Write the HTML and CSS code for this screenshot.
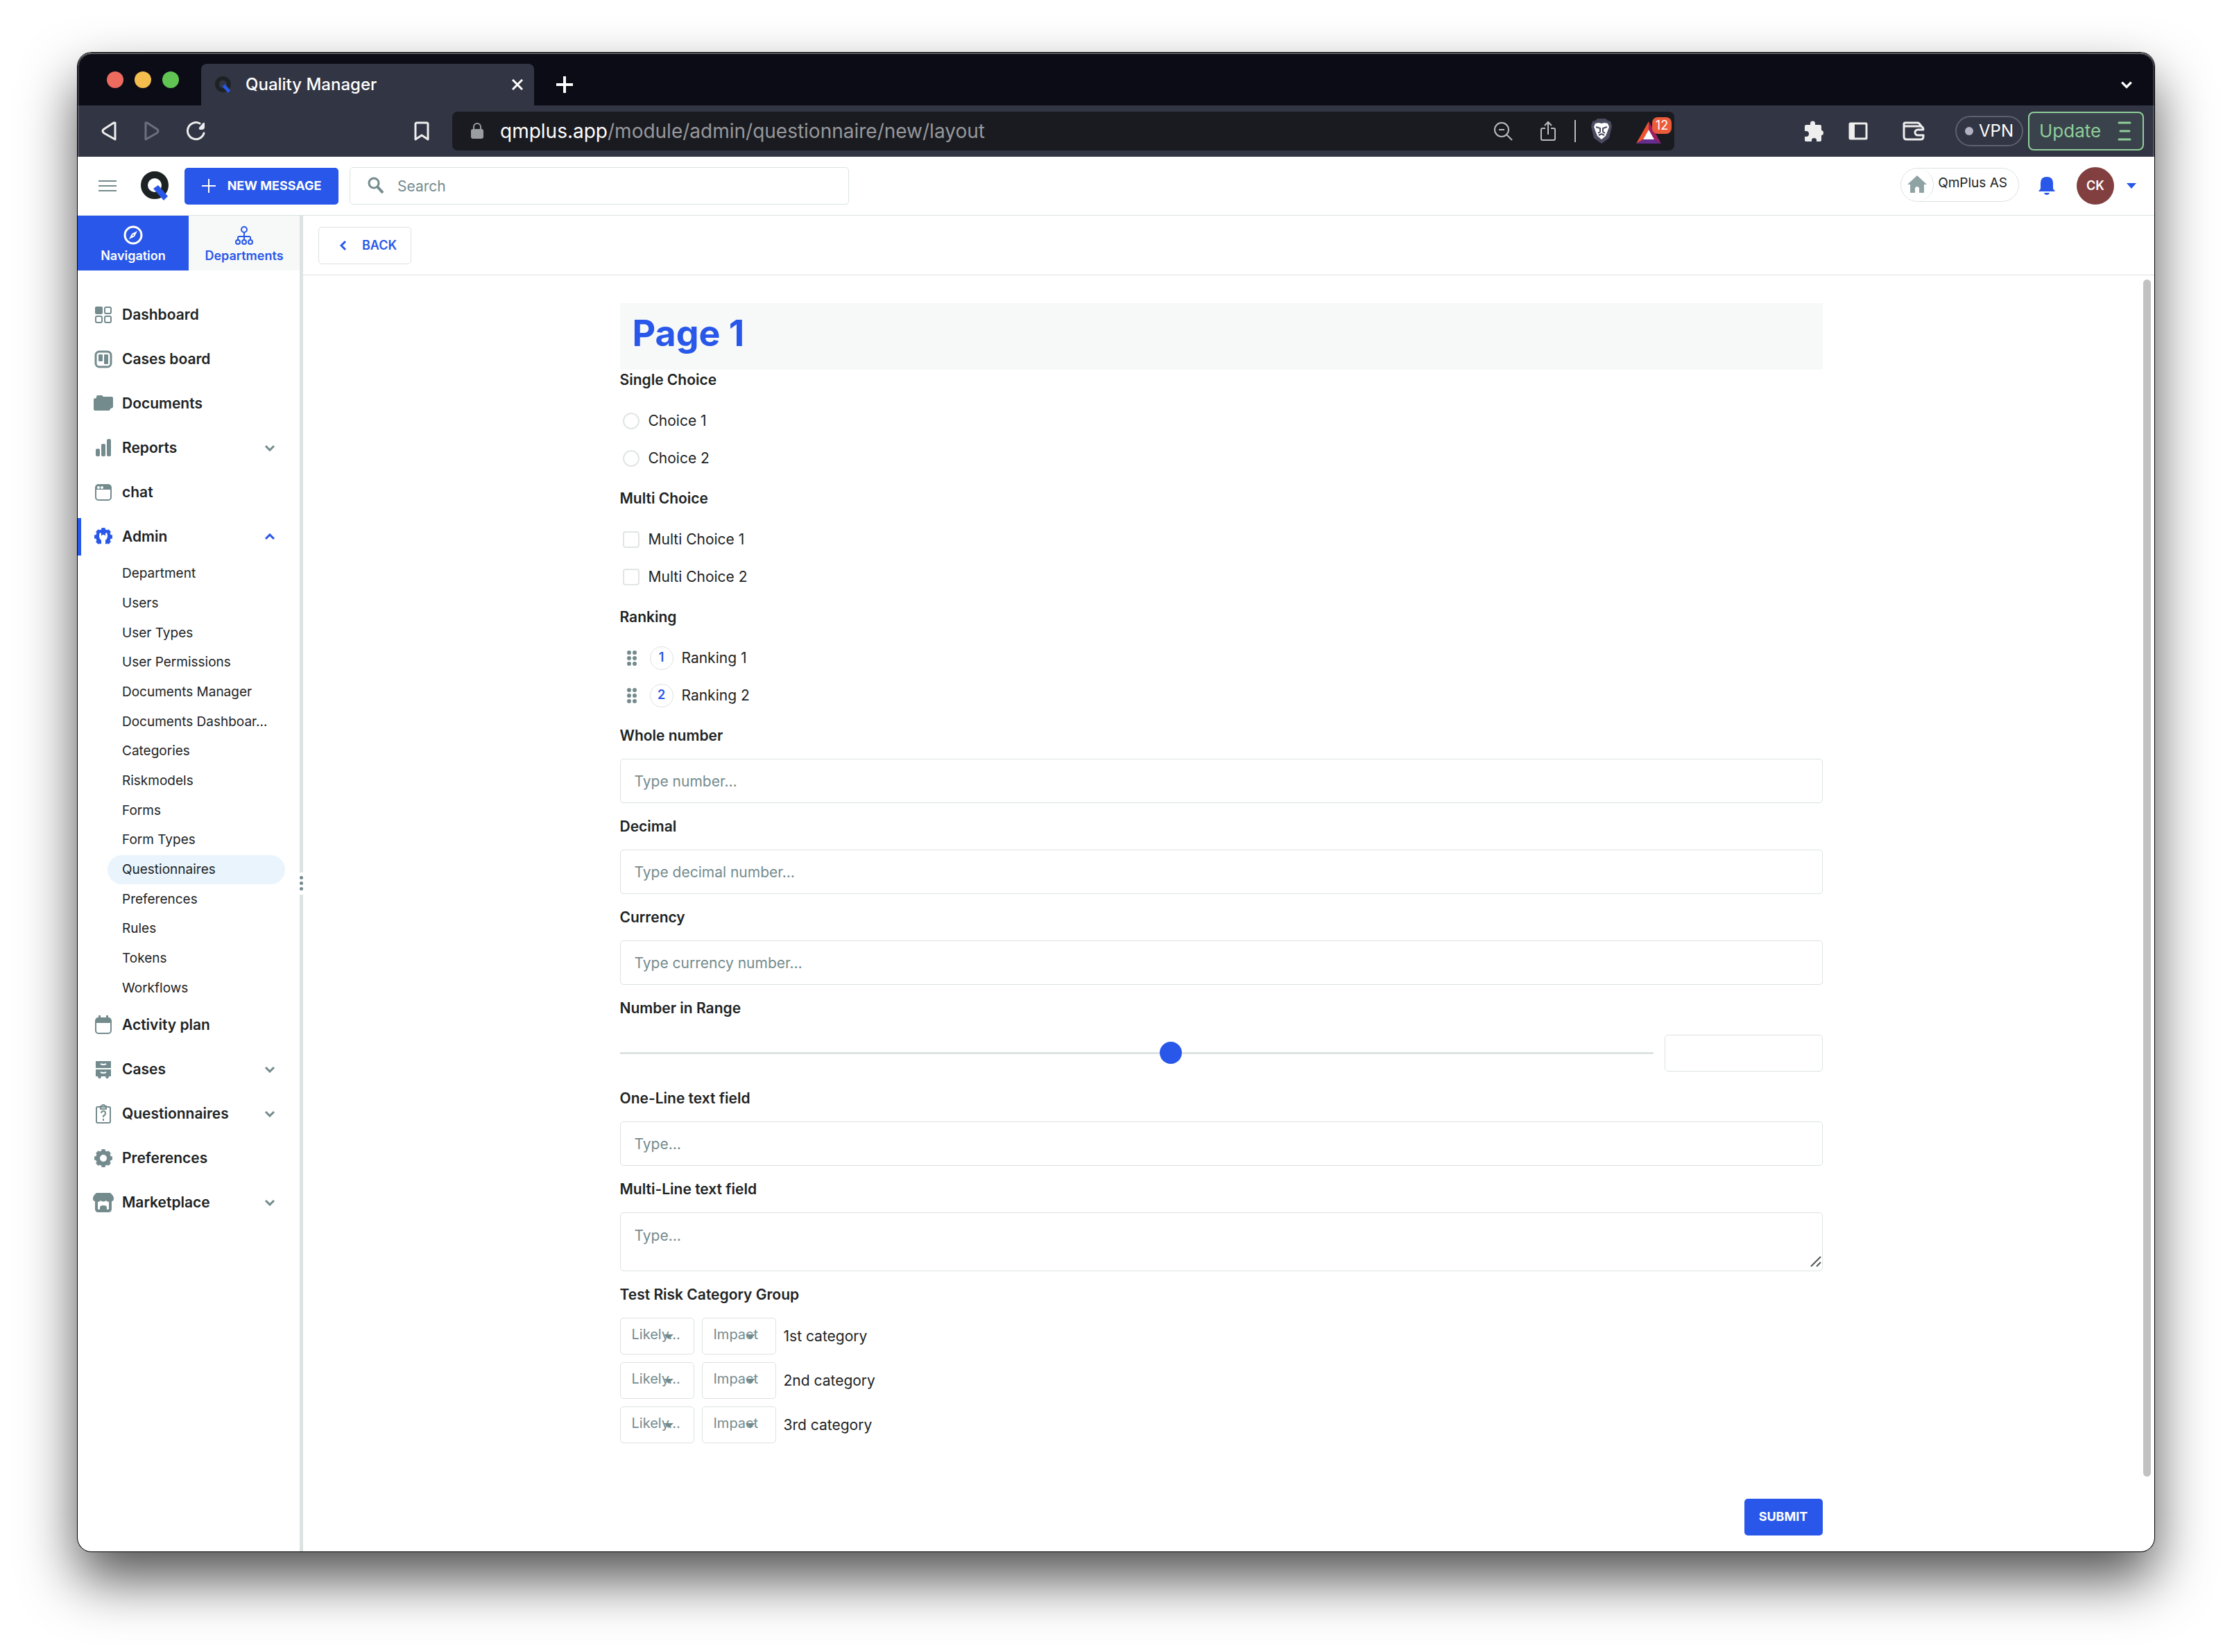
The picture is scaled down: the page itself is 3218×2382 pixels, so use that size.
FILE: index.html
```html
<!DOCTYPE html>
<html lang="en">
<head>
<meta charset="utf-8">
<title>Quality Manager</title>
<link rel="stylesheet" href="styles.css">
</head>
<body>
<svg class="sprite" aria-hidden="true">
  <symbol id="chevron" viewBox="0 0 16 10"><path d="M2 2l6 6 6-6" fill="none" stroke="currentColor" stroke-width="3"/></symbol>
  <symbol id="grip" viewBox="0 0 14 24"><g fill="currentColor"><circle cx="3" cy="4" r="3"/><circle cx="11" cy="4" r="3"/><circle cx="3" cy="12" r="3"/><circle cx="11" cy="12" r="3"/><circle cx="3" cy="20" r="3"/><circle cx="11" cy="20" r="3"/></g></symbol>
  <symbol id="logo" viewBox="0 0 42 42"><ellipse cx="20" cy="20" rx="15" ry="15" fill="none" stroke="#1d2324" stroke-width="10"/><path d="M18 25l7-5 14 16-6 6z" fill="#2857e9"/></symbol>
</svg>

<div class="window">
  <header class="tabbar">
    <div class="lights"><i class="light red"></i><i class="light yellow"></i><i class="light green"></i></div>
    <div class="tab">
      <svg class="i24" aria-hidden="true"><use href="#logo"/></svg>
      <span class="tab-title">Quality Manager</span>
      <button class="plain" aria-label="Close tab"><svg class="i16" viewBox="0 0 16 16"><path d="M1 1l14 14M15 1L1 15" stroke="#fff" stroke-width="3"/></svg></button>
    </div>
    <button class="plain new-tab" aria-label="New tab"><svg class="i24" viewBox="0 0 24 24"><path d="M12 0v24M0 12h24" stroke="#fff" stroke-width="4"/></svg></button>
    <button class="plain tab-menu" aria-label="Search tabs"><svg class="chev-lg"><use href="#chevron"/></svg></button>
  </header>

  <div class="toolbar">
    <div class="history">
      <button class="plain" aria-label="Back"><svg width="24" height="28" viewBox="0 0 24 28"><path d="M21 2v24L5 17q-4-3 0-6L19 2z" fill="none" stroke="#eee" stroke-width="3" stroke-linejoin="round"/></svg></button>
      <button class="plain" aria-label="Forward"><svg width="24" height="28" viewBox="0 0 24 28"><path d="M3 2v24l16-9q4-3 0-6L5 2z" fill="none" stroke="#6d707c" stroke-width="3" stroke-linejoin="round"/></svg></button>
      <button class="plain" aria-label="Reload"><svg width="28" height="28" viewBox="0 0 28 28"><path d="M19 3A12 12 0 1 0 25 17" fill="none" stroke="#eee" stroke-width="3" stroke-linecap="round"/><path d="M26 3v5q0 4-4 4h-3q-2-1-1-3l6-7q2-1 2 1z" fill="#eee"/></svg></button>
    </div>
    <button class="plain" aria-label="Bookmark"><svg width="22" height="28" viewBox="0 0 22 28"><path d="M2 4q0-2 2-2h14q2 0 2 2v22l-9-6-9 6z" fill="none" stroke="#eee" stroke-width="3" stroke-linejoin="round"/></svg></button>
    <div class="address">
      <svg width="18" height="24" viewBox="0 0 18 24"><rect y="9" width="18" height="14" rx="3" fill="#9a9ea1"/><path d="M4 10V6a5 5 0 0 1 10 0v4" fill="none" stroke="#9a9ea1" stroke-width="2"/></svg>
      <span class="url"><b>qmplus.app</b>/module/admin/questionnaire/new/layout</span>
      <svg width="28" height="28" viewBox="0 0 28 28" fill="none" stroke="#b9bbbd" stroke-width="2"><circle cx="12" cy="12" r="10"/><path d="M19 19l8 8M8 12h8"/></svg>
      <svg class="share" width="24" height="30" viewBox="0 0 24 30" fill="none" stroke="#b9bbbd" stroke-width="2"><path d="M8 11H4q-2 0-2 2v13q0 2 2 2h16q2 0 2-2V13q0-2-2-2h-4M12 20V3M7 7l5-5 5 5"/></svg>
      <i class="rule"></i>
      <svg width="32" height="38" viewBox="0 0 32 38"><path d="M10 1h12l3 3 4 1 2 7-4 17-11 8L5 29 1 12l2-7 4-1z" fill="#4b4c60"/><path d="M7 8l5-1 4 1 4-1 5 1 2 5-3 8-2 5-6 5-6-5-2-5-3-8z" fill="#fff"/><path d="M8 13l6 2v5l-3 2M24 13l-6 2v5l3 2M12 25l4-2 4 2" fill="none" stroke="#4b4c60" stroke-width="2"/></svg>
      <span class="rewards">
        <svg width="36" height="32" viewBox="0 0 36 32"><path d="M18 0L0 32l10-6 8-13z" fill="#f0532d"/><path d="M18 0l18 32-10-6-8-13z" fill="#9e1f63"/><path d="M0 32h36l-10-6H10z" fill="#662d91"/><path d="M18 12l8 14H10z" fill="#fff"/></svg>
        <span class="badge">12</span>
      </span>
    </div>
    <div class="extensions">
      <button class="plain" aria-label="Extensions"><svg width="30" height="30" viewBox="0 0 30 30"><path d="M3 6h6V4a3 3 0 0 1 7 0v2h7q2 0 2 2v6h1a4 4 0 0 1 0 7h-1v7q0 2-2 2h-5v-3a4 4 0 0 0-7 0v3H3q-2 0-2-2v-5h2a4 4 0 0 0 0-8H1V8q0-2 2-2z" fill="#eee"/></svg></button>
      <button class="plain" aria-label="Sidebar"><svg width="28" height="26" viewBox="0 0 28 26"><rect x="2" y="2" width="24" height="22" rx="1" fill="none" stroke="#eee" stroke-width="3"/><path d="M3 3h6v20H3z" fill="#eee"/></svg></button>
      <button class="plain wallet" aria-label="Wallet"><svg width="32" height="28" viewBox="0 0 32 28" fill="none" stroke="#eee" stroke-width="3"><path d="M28 8l-4-5q-1-1-3-1H4Q2 2 2 4v18q0 4 4 4h20q4 0 4-4v-3M2 7h24q4 1 4 5"/><path d="M31 12h-9a4 4 0 0 0 0 8h9"/></svg></button>
      <button class="vpn"><i></i>VPN</button>
      <button class="update">Update<svg width="20" height="28" viewBox="0 0 20 28"><path d="M2 2h16M4 14h13M2 26h16" stroke="#8fce9a" stroke-width="3" stroke-linecap="round"/></svg></button>
    </div>
  </div>

  <div class="appbar">
    <button class="plain" aria-label="Menu"><svg width="26" height="18" viewBox="0 0 26 18"><path d="M0 2h26M0 9h26M0 16h26" stroke="#748b8e" stroke-width="2"/></svg></button>
    <a class="logo" href="#" aria-label="Home"><svg width="42" height="42"><use href="#logo"/></svg></a>
    <button class="btn new-message"><svg width="20" height="20" viewBox="0 0 20 20"><path d="M10 0v20M0 10h20" stroke="#fff" stroke-width="2"/></svg>NEW MESSAGE</button>
    <label class="search">
      <svg width="26" height="26" viewBox="0 0 26 26" fill="none" stroke="#748b8e"><circle cx="10" cy="9" r="7" stroke-width="3"/><path d="M15 14l8 9" stroke-width="4"/></svg>
      <input type="search" placeholder="Search" aria-label="Search">
    </label>
    <div class="account">
      <button class="company"><span class="company-icon"><svg width="28" height="26" viewBox="0 0 28 26"><path d="M14 0l14 13h-4v12h-7v-7q-3-4-6 0v7H4V13H0z" fill="#8fa3a5"/></svg></span><span class="company-name">QmPlus AS</span></button>
      <button class="plain bell" aria-label="Notifications"><svg width="24" height="26" viewBox="0 0 24 26"><path d="M12 0q9 0 9 9v8l3 4H0l3-4V9q0-9 9-9zM8 23h8q-1 3-4 3t-4-3z" fill="#2857e9"/></svg></button>
      <span class="avatar">CK</span>
      <button class="plain" aria-label="Account menu"><svg width="14" height="8" viewBox="0 0 14 8"><path d="M0 0h14L7 8z" fill="#2857e9"/></svg></button>
    </div>
  </div>

  <div class="body">
    <aside class="sidebar">
      <div class="switch">
        <button class="switch-item on"><svg width="28" height="28" viewBox="0 0 28 28"><circle cx="14" cy="14" r="12" fill="none" stroke="#fff" stroke-width="3"/><path d="M20 8l-4 8-8 4 4-8z" fill="#fff"/><circle cx="14" cy="14" r="1" fill="#2857e9"/></svg>Navigation</button>
        <button class="switch-item"><svg width="28" height="28" viewBox="0 0 28 28" fill="none" stroke="#2857e9" stroke-width="2"><circle cx="14" cy="6" r="4"/><circle cx="5" cy="24" r="3"/><circle cx="14" cy="24" r="3"/><circle cx="23" cy="24" r="3"/><path d="M14 10v11M5 21v-3q0-2 2-2h14q2 0 2 2v3"/></svg>Departments</button>
      </div>
      <nav class="nav">
        <a href="#"><svg viewBox="0 0 32 32"><rect x="4" y="4" width="11" height="11" rx="2" fill="currentColor"/><g fill="none" stroke="currentColor" stroke-width="2"><rect x="18" y="5" width="9" height="9" rx="2"/><rect x="5" y="18" width="9" height="9" rx="2"/><rect x="18" y="18" width="9" height="9" rx="2"/></g></svg><span>Dashboard</span></a>
        <a href="#"><svg viewBox="0 0 32 32"><rect x="5" y="5" width="22" height="22" rx="5" fill="none" stroke="currentColor" stroke-width="3"/><rect x="9" y="9" width="6" height="10" rx="1" fill="currentColor"/><rect x="17" y="9" width="6" height="14" rx="1" fill="currentColor"/></svg><span>Cases board</span></a>
        <a href="#"><svg viewBox="0 0 32 32"><path d="M6 6q0-2 2-2h6l2 2h12q2 0 2 2v12q0 3-4 3 0 3-2 3H4q-2 0-2-2V10q0-2 4-2z" fill="currentColor"/></svg><span>Documents</span></a>
        <a href="#"><svg viewBox="0 0 32 32" fill="currentColor"><rect x="5" y="17" width="6" height="11" rx="2"/><rect x="13" y="10" width="6" height="18" rx="2"/><rect x="21" y="3" width="6" height="25" rx="2"/></svg><span>Reports</span><svg class="chev"><use href="#chevron"/></svg></a>
        <a href="#"><svg viewBox="0 0 32 32"><rect x="5" y="5" width="22" height="22" rx="4" fill="none" stroke="currentColor" stroke-width="2"/><path d="M5 12V8q0-3 4-3h14q4 0 4 3v4z" fill="currentColor"/><circle cx="9" cy="9" r="2" fill="#fff"/><circle cx="14" cy="9" r="2" fill="#fff"/></svg><span>chat</span></a>
        <a href="#" class="open"><svg viewBox="0 0 32 32"><circle cx="16" cy="16" r="7" fill="none" stroke="currentColor" stroke-width="8"/><circle cx="16" cy="16" r="11" fill="none" stroke="currentColor" stroke-width="4" pathLength="80" stroke-dasharray="6 4" stroke-dashoffset="3"/><path d="M13 30v-9q-5-4-2-11l2 1v5l3 2 3-2v-5l2-1q3 7-2 11v9z" fill="#fff"/></svg><span>Admin</span><svg class="chev up"><use href="#chevron"/></svg></a>
        <div class="subnav">
          <a href="#">Department</a>
          <a href="#">Users</a>
          <a href="#">User Types</a>
          <a href="#">User Permissions</a>
          <a href="#">Documents Manager</a>
          <a href="#">Documents Dashboar…</a>
          <a href="#">Categories</a>
          <a href="#">Riskmodels</a>
          <a href="#">Forms</a>
          <a href="#">Form Types</a>
          <a href="#" class="current">Questionnaires</a>
          <a href="#">Preferences</a>
          <a href="#">Rules</a>
          <a href="#">Tokens</a>
          <a href="#">Workflows</a>
        </div>
        <a href="#"><svg viewBox="0 0 32 32"><rect x="5" y="6" width="22" height="22" rx="4" fill="none" stroke="currentColor" stroke-width="2"/><path d="M5 13V9q0-4 4-4V2h3v3h8V2h3v3q4 0 4 4v4z" fill="currentColor"/></svg><span>Activity plan</span></a>
        <a href="#"><svg viewBox="0 0 32 32"><path d="M5 4h22v10H5zM5 16h22v10h-3l-1 3h-3l-1-3h-6l-1 3H9l-1-3H5z" fill="currentColor"/><path d="M12 8q4 2 8 0M12 20q4 2 8 0" fill="none" stroke="#fff" stroke-width="2"/></svg><span>Cases</span><svg class="chev"><use href="#chevron"/></svg></a>
        <a href="#"><svg viewBox="0 0 32 32" fill="none" stroke="currentColor" stroke-width="2"><rect x="6" y="6" width="20" height="23" rx="2"/><path d="M12 9V5h2a2 2 0 0 1 4 0h2v4zM13 15q0-3 3-3t3 3-3 4v2M16 23v3"/></svg><span>Questionnaires</span><svg class="chev"><use href="#chevron"/></svg></a>
        <a href="#"><svg viewBox="0 0 32 32" fill="none" stroke="currentColor"><circle cx="16" cy="16" r="8" stroke-width="6"/><circle cx="16" cy="16" r="11" stroke-width="4" pathLength="80" stroke-dasharray="6 4" stroke-dashoffset="3"/></svg><span>Preferences</span></a>
        <a href="#"><svg viewBox="0 0 32 32"><path d="M6 2h20q5 4 5 8 0 4-3 4v11q0 5-5 5H9q-5 0-5-5V14q-3 0-3-4 0-4 5-8z" fill="currentColor"/><path d="M8 15q3 0 4-2 4 3 8 0 1 2 4 2v10q0 1-2 1h-1v-3q0-3-5-3t-5 3v3h-1q-2 0-2-1z" fill="#fff"/></svg><span>Marketplace</span><svg class="chev"><use href="#chevron"/></svg></a>
      </nav>
    </aside>
    <div class="splitter"><i class="bar"></i><svg width="5" height="32" viewBox="0 0 10 64" fill="#748b8e"><circle cx="5" cy="15" r="5"/><circle cx="5" cy="31" r="5"/><circle cx="5" cy="47" r="5"/></svg><i class="bar"></i></div>

    <main class="main">
      <div class="backbar"><button class="back"><svg width="10" height="16" viewBox="0 0 10 16"><path d="M8 2L2 8l6 6" fill="none" stroke="#2857e9" stroke-width="3"/></svg>BACK</button></div>
      <div class="scroll">
        <form class="form">
          <h1>Page 1</h1>
          <fieldset class="choices">
            <legend>Single Choice</legend>
            <label><input type="radio" name="single">Choice 1</label>
            <label><input type="radio" name="single">Choice 2</label>
          </fieldset>
          <fieldset class="choices">
            <legend>Multi Choice</legend>
            <label><input type="checkbox">Multi Choice 1</label>
            <label><input type="checkbox">Multi Choice 2</label>
          </fieldset>
          <fieldset class="choices">
            <legend>Ranking</legend>
            <div class="rank"><svg width="14" height="24"><use href="#grip"/></svg><b>1</b>Ranking 1</div>
            <div class="rank"><svg width="14" height="24"><use href="#grip"/></svg><b>2</b>Ranking 2</div>
          </fieldset>
          <div class="field"><label for="whole">Whole number</label><input class="box" id="whole" type="text" placeholder="Type number…"></div>
          <div class="field"><label for="decimal">Decimal</label><input class="box" id="decimal" type="text" placeholder="Type decimal number…"></div>
          <div class="field"><label for="currency">Currency</label><input class="box" id="currency" type="text" placeholder="Type currency number…"></div>
          <div class="field range-field"><label for="range">Number in Range</label>
            <div class="range"><input id="range" type="range" min="0" max="1000" value="534"><input class="box amount" type="text" aria-label="Number in Range value"></div>
          </div>
          <div class="field"><label for="line">One-Line text field</label><input class="box" id="line" type="text" placeholder="Type…"></div>
          <div class="field"><label for="multi">Multi-Line text field</label>
            <div class="area"><textarea class="box" id="multi" placeholder="Type…"></textarea><svg width="16" height="16" viewBox="0 0 16 16"><path d="M1 15L15 1M9 15l6-6" stroke="#555" stroke-width="2"/></svg></div>
          </div>
          <fieldset class="risk">
            <legend>Test Risk Category Group</legend>
            <div class="risk-row"><span class="pick"><select aria-label="1st category likelyhood"><option>Likely…</option></select></span><span class="pick"><select aria-label="1st category impact"><option>Impact</option></select></span>1st category</div>
            <div class="risk-row"><span class="pick"><select aria-label="2nd category likelyhood"><option>Likely…</option></select></span><span class="pick"><select aria-label="2nd category impact"><option>Impact</option></select></span>2nd category</div>
            <div class="risk-row"><span class="pick"><select aria-label="3rd category likelyhood"><option>Likely…</option></select></span><span class="pick"><select aria-label="3rd category impact"><option>Impact</option></select></span>3rd category</div>
          </fieldset>
          <button type="button" class="btn submit">SUBMIT</button>
        </form>
        <i class="thumb"></i>
      </div>
    </main>
  </div>
</div>
</body>
</html>
```
FILE: styles.css
```css
:root {
  --blue: #2857e9;
  --ink: #1d2324;
  --muted: #748b8e;
  --line: #dde2e2;
}

* { box-sizing: border-box; }

body {
  margin: 0;
  padding: 76px 112px 148px;
  background: #fff;
  color: var(--ink);
  font: 400 21px/30px Inter, "Liberation Sans", sans-serif;
}

button, input, select, textarea { font: inherit; color: inherit; }
button { cursor: pointer; white-space: nowrap; }
a { color: inherit; text-decoration: none; }
svg { display: block; flex: none; }
i { display: block; }

.sprite { position: absolute; width: 0; height: 0; }
.plain { display: flex; padding: 0; border: 0; background: none; }
.i16 { width: 16px; height: 16px; }
.i24 { width: 24px; height: 24px; }

.window {
  overflow: hidden;
  border-radius: 20px;
  background: #fff;
  box-shadow: 0 0 0 1px #000, 0 40px 80px rgba(0, 0, 0, .68);
}

/* Browser tabs */
.tabbar {
  display: flex;
  align-items: flex-end;
  height: 76px;
  background: #0b0c15;
  border-top: 2px solid #55595c;
  border-radius: 20px 20px 0 0;
  box-shadow: inset 2px 0 #35363e, inset -2px 0 #35363e;
}
.lights { display: flex; gap: 16px; padding: 0 32px 25px 42px; }
.light { width: 24px; height: 24px; border-radius: 50%; }
.red { background: #ed6a5e; }
.yellow { background: #f4be4f; }
.green { background: #61c554; }
.tab {
  display: flex;
  align-items: center;
  width: 480px;
  height: 60px;
  padding: 0 16px 0 20px;
  border-radius: 8px 8px 0 0;
  background: #323543;
  color: #fff;
  font-size: 24px;
  font-weight: 500;
}
.tab-title { flex: 1; padding-left: 20px; }
.new-tab { padding: 0 32px 18px; }
.tab-menu { margin-left: auto; padding: 0 31px 24px; color: #fff; }
.chev-lg { width: 18px; height: 12px; }

/* Browser toolbar */
.toolbar {
  display: flex;
  align-items: center;
  height: 74px;
  padding: 0 15px 0 33px;
  background: #323543;
  box-shadow: inset 2px 0 #52555f, inset -2px 0 #52555f;
}
.history { display: flex; align-items: center; gap: 38px; flex: 1; max-width: 452px; }
.address {
  display: flex;
  align-items: center;
  flex: 1;
  max-width: 1762px;
  height: 56px;
  margin-left: 33px;
  padding: 0 4px 0 27px;
  border-radius: 8px;
  background: #1a1b20;
}
.url { flex: 1; padding-left: 24px; color: #96989c; font-size: 28px; }
.url b { color: #fff; font-weight: 400; }
.share { margin: 0 26px 0 39px; }
.rule { width: 2px; height: 32px; margin-right: 21px; background: #b9bbbd; }
.rewards { position: relative; padding: 4px 15px 0 34px; }
.badge {
  position: absolute;
  top: -2px;
  right: 0;
  width: 28px;
  height: 24px;
  border-radius: 8px;
  background: #ec5b3a;
  color: #fff;
  font-size: 18px;
  line-height: 24px;
  text-align: center;
}
.extensions { display: flex; align-items: center; margin-left: auto; }
.extensions .plain { margin-right: 34px; }
.extensions .wallet { margin: 0 44px 0 16px; }
.vpn {
  display: flex;
  align-items: center;
  gap: 8px;
  width: 98px;
  height: 44px;
  margin-right: 7px;
  padding: 0 0 0 12px;
  border: 2px solid #5d606d;
  border-radius: 22px;
  background: none;
  color: #fff;
  font-size: 24px;
}
.vpn i { width: 12px; height: 12px; border-radius: 50%; background: #b1b3c3; }
.update {
  display: flex;
  align-items: center;
  justify-content: space-between;
  width: 167px;
  height: 56px;
  padding: 0 16px 0 14px;
  border: 2px solid #8fce9a;
  border-radius: 8px;
  background: #3a424b;
  color: #8fce9a;
  font-size: 26px;
}

/* Application bar */
.appbar {
  display: flex;
  align-items: center;
  height: 85px;
  padding: 0 26px 0 30px;
  border-bottom: 1px solid var(--line);
}
.logo { margin: 0 21px 0 35px; }
.btn {
  display: flex;
  align-items: center;
  justify-content: center;
  height: 53px;
  padding: 0 20px;
  border: 0;
  border-radius: 5px;
  background: var(--blue);
  color: #fff;
  font-size: 18px;
  font-weight: 700;
}
.new-message { gap: 17px; width: 222px; }
.search {
  display: flex;
  align-items: center;
  width: 720px;
  height: 54px;
  margin-left: 16px;
  padding: 0 24px;
  border: 1px solid var(--line);
  border-radius: 5px;
}
.search input { flex: 1; padding: 2px 0 0 18px; border: 0; background: none; outline: 0; }
::placeholder { color: var(--muted); opacity: 1; }
.account { display: flex; align-items: center; margin-left: auto; }
.company {
  display: flex;
  align-items: center;
  gap: 6px;
  height: 49px;
  margin-bottom: 4px;
  padding: 0 16px 0 0;
  border: 1px solid var(--line);
  border-radius: 25px;
  background: #fff;
  font-size: 19px;
}
.company-name { padding-bottom: 4px; }
.company-icon {
  display: grid;
  place-items: center;
  width: 47px;
  height: 47px;
  border-right: 1px solid var(--line);
  border-radius: 50%;
}
.bell { margin: 0 31px 0 28px; }
.avatar {
  width: 54px;
  height: 54px;
  margin-right: 18px;
  border-radius: 50%;
  background: #813f3f;
  color: #fff;
  font-size: 18px;
  font-weight: 600;
  line-height: 54px;
  text-align: center;
}

/* Sidebar */
.body { display: flex; }
.sidebar { flex: none; width: 320px; }
.switch { display: grid; grid-template-columns: 1fr 1fr; }
.switch-item {
  display: flex;
  flex-direction: column;
  align-items: center;
  gap: 4px;
  height: 79px;
  padding: 14px 0 0;
  border: 0;
  background: #f7f9f9;
  color: var(--blue);
  font-size: 18px;
  font-weight: 600;
  line-height: 24px;
}
.switch-item.on { background: var(--blue); color: #fff; }
.nav { padding-top: 37px; }
.nav > a {
  display: flex;
  align-items: center;
  gap: 11px;
  height: 54px;
  margin-bottom: 10px;
  padding: 0 35px 0 21px;
  font-weight: 600;
}
.nav > a > svg { width: 32px; height: 32px; color: var(--muted); }
.nav > a > .chev { width: 16px; height: 10px; margin-left: auto; }
.nav > .open { margin-bottom: 5px; padding-left: 16px; border-left: 5px solid var(--blue); }
.nav > .open > svg { color: var(--blue); }
.up { transform: rotate(180deg); }
.subnav {
  display: grid;
  grid-auto-rows: 1fr;
  height: 640px;
  margin: 0 21px 5px 43px;
  font-size: 19px;
}
.subnav a { display: flex; align-items: center; padding-left: 21px; border-radius: 22px; }
.subnav .current { background: #e9f4fd; }
.splitter { display: flex; flex: none; flex-direction: column; width: 5px; }
.bar { flex: 1; background: var(--line); }

/* Questionnaire */
.main { flex: 1; min-width: 0; }
.backbar { height: 86px; padding: 16px 22px; border-bottom: 1px solid var(--line); }
.back {
  display: flex;
  align-items: center;
  gap: 22px;
  height: 54px;
  padding: 0 20px 0 30px;
  border: 1px solid var(--line);
  border-radius: 5px;
  background: #fff;
  color: var(--blue);
  font-size: 18px;
  font-weight: 600;
}
.scroll { position: relative; padding: 40px 22px 23px 0; }
.thumb {
  position: absolute;
  top: 6px;
  right: 5px;
  bottom: 108px;
  width: 11px;
  border-radius: 6px;
  background: #c1c1c1;
}
.form { display: flex; flex-direction: column; max-width: 1734px; margin: 0 auto; }
h1 {
  margin: 0;
  padding: 12px 18px 20px;
  background: #f7f9f9;
  color: var(--blue);
  font-size: 52px;
  font-weight: 700;
  line-height: 64px;
}
fieldset { min-width: 0; margin: 0; padding: 0; border: 0; }
legend { padding: 0; font-weight: 600; }
.choices { padding-bottom: 16px; }
.choices legend { padding-bottom: 17px; }
.choices label, .rank { display: flex; align-items: center; height: 54px; }
.choices label { gap: 13px; padding-left: 4px; }
.choices input {
  width: 24px;
  height: 24px;
  margin: 0;
  border: 2px solid #e2e5e5;
  border-radius: 4px;
  appearance: none;
}
.choices input[type="radio"] { border-radius: 50%; }
.rank { gap: 12px; padding-left: 10px; }
.rank svg { margin-right: 7px; color: var(--muted); }
.rank b {
  width: 34px;
  height: 34px;
  border: 1px solid var(--line);
  border-radius: 50%;
  color: var(--blue);
  font-size: 18px;
  font-weight: 600;
  line-height: 30px;
  text-align: center;
}
.field { display: flex; flex-direction: column; gap: 18px; margin-bottom: 19px; }
.field > label { font-weight: 600; }
.box {
  display: block;
  width: 100%;
  height: 64px;
  padding: 0 20px;
  border: 1px solid var(--line);
  border-radius: 5px;
  background: #fff;
  outline: 0;
}
.range-field { gap: 23px; margin-bottom: 24px; }
.range { display: flex; align-items: center; gap: 16px; }
.range input[type="range"] { flex: 1; height: 32px; margin: 0; background: none; appearance: none; }
::-webkit-slider-runnable-track { height: 3px; background: var(--line); }
::-webkit-slider-thumb {
  width: 32px;
  height: 32px;
  margin-top: -15px;
  border-radius: 50%;
  background: var(--blue);
  appearance: none;
}
.amount { width: 228px; height: 53px; }
.area { position: relative; }
textarea.box { height: 85px; padding: 18px 20px; resize: none; }
.area svg { position: absolute; right: 2px; bottom: 6px; }
.risk legend { padding-bottom: 18px; }
.risk-row { display: flex; align-items: center; gap: 11px; margin-bottom: 11px; }
.pick { position: relative; }
.pick::after {
  content: "";
  position: absolute;
  top: 24px;
  right: 30px;
  border: 7px solid transparent;
  border-top-color: var(--muted);
  border-bottom: 0;
}
.pick select {
  display: block;
  width: 107px;
  height: 53px;
  padding: 0 0 6px 16px;
  border: 1px solid var(--line);
  border-radius: 5px;
  background: #fff;
  color: var(--muted);
  font-size: 20px;
  appearance: none;
}
.submit { align-self: flex-end; width: 113px; margin-top: 69px; padding-bottom: 2px; }
```
